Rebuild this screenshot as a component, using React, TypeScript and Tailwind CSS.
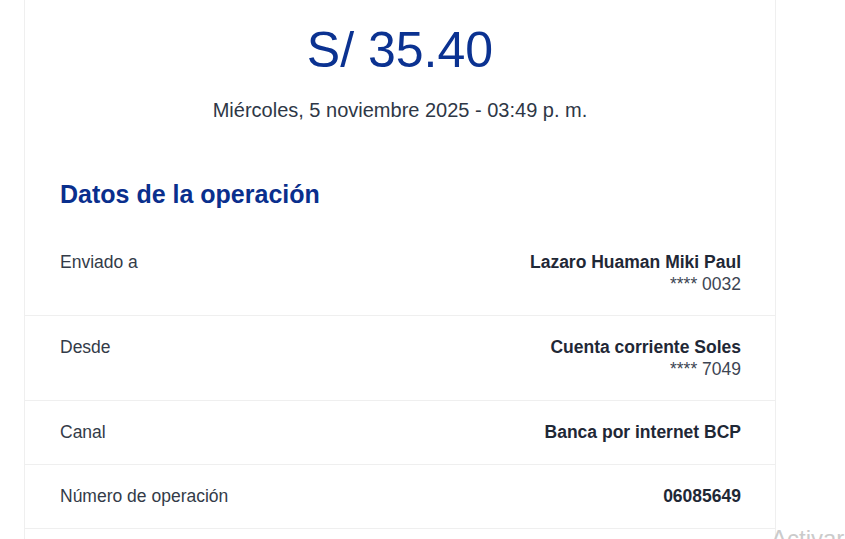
const rows = [
  { label: "Enviado a", value: "Lazaro Huaman Miki Paul", sub: "**** 0032" },
  { label: "Desde", value: "Cuenta corriente Soles", sub: "**** 7049" },
  { label: "Canal", value: "Banca por internet BCP" },
  { label: "Número de operación", value: "06085649" },
];

function App() {
  return (
    <div className="relative h-[539px] w-[845px] overflow-hidden bg-white font-['Liberation_Sans',Arial,sans-serif]">
      <div className="ml-[24px] w-[752px] border-x border-b border-[#efefef]">
        <div className="flex flex-col items-center pt-[25px]">
          <div className="text-[50px] leading-none text-[#0b3291]">S/ 35.40</div>
          <div className="mt-[21px] text-[20px] leading-[28px] text-[#2e3746]">
            Miércoles, 5 noviembre 2025 - 03:49 p. m.
          </div>
        </div>

        <h2 className="mt-[55px] mb-[22px] pl-[35px] text-[25px] font-bold leading-[30px] text-[#0a2f8d]">
          Datos de la operación
        </h2>

        {rows.map((r) => (
          <div
            key={r.label}
            className="flex justify-between border-b border-[#efefef] pl-[35px] pr-[34px] py-[20px] text-[17.5px]"
          >
            <div className="leading-[23px] text-[#333b48]">{r.label}</div>
            <div className="text-right">
              <div className="font-bold leading-[23px] text-[#1f2836]">{r.value}</div>
              {r.sub && <div className="leading-[21px] text-[#3d4553]">{r.sub}</div>}
            </div>
          </div>
        ))}
        <div className="h-[40px]" />
      </div>

      {/* windows watermark */}
      <div className="absolute left-[771px] top-[521px] whitespace-nowrap text-[24px] text-[#cbcbcb]">
        Activar Windows
      </div>
    </div>
  );
}

export default App;
